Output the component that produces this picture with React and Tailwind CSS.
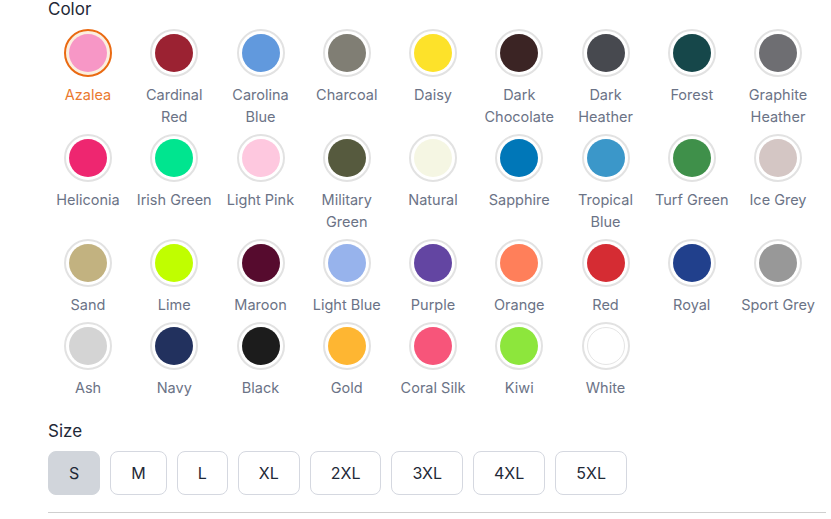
import { useState } from 'react';

const colors = [
  ['Azalea', '#f797c6'],
  ['Cardinal Red', '#9b2232'],
  ['Carolina Blue', '#6199dd'],
  ['Charcoal', '#807e74'],
  ['Daisy', '#fde22a'],
  ['Dark Chocolate', '#3b2424'],
  ['Dark Heather', '#47494f'],
  ['Forest', '#16474a'],
  ['Graphite Heather', '#6e6e72'],
  ['Heliconia', '#ee2670'],
  ['Irish Green', '#00e58f'],
  ['Light Pink', '#fec8df'],
  ['Military Green', '#565a3e'],
  ['Natural', '#f5f6e3'],
  ['Sapphire', '#0077b8'],
  ['Tropical Blue', '#3b97c9'],
  ['Turf Green', '#3f904a'],
  ['Ice Grey', '#d4c6c4'],
  ['Sand', '#c2b280'],
  ['Lime', '#c0fe00'],
  ['Maroon', '#560b2e'],
  ['Light Blue', '#97b3ec'],
  ['Purple', '#6345a2'],
  ['Orange', '#ff7f5a'],
  ['Red', '#d52c33'],
  ['Royal', '#21408c'],
  ['Sport Grey', '#989898'],
  ['Ash', '#d4d4d4'],
  ['Navy', '#22315e'],
  ['Black', '#1c1c1c'],
  ['Gold', '#feb632'],
  ['Coral Silk', '#f7557a'],
  ['Kiwi', '#8de63c'],
  ['White', '#ffffff'],
];

// names that wrap onto two lines in the grid
const twoLine = ['Cardinal Red', 'Carolina Blue', 'Dark Chocolate', 'Dark Heather', 'Graphite Heather', 'Military Green', 'Tropical Blue'];

const sizes = ['S', 'M', 'L', 'XL', '2XL', '3XL', '4XL', '5XL'];

export default function App() {
  const [color, setColor] = useState('Azalea');
  const [size, setSize] = useState('S');

  return (
    <div className="bg-white min-h-[519px] pl-12 pr-[5px]" style={{ fontFamily: 'Inter, sans-serif' }}>
      <div className="text-[17px] leading-[18px] text-[#1f2937]">Color</div>
      <div className="mt-[11px] ml-px grid grid-cols-[repeat(9,78px)] gap-x-[8.25px] gap-y-[6px]">
        {colors.map(([name, hex]) => {
          const active = name === color;
          return (
            <button
              key={name}
              onClick={() => setColor(name)}
              className="flex flex-col items-center"
            >
              <span
                className={
                  'w-12 h-12 rounded-full border-2 p-[3px] ' +
                  (active ? 'border-[#ea6a12] bg-[#fbefe0]' : 'border-[#e2e2e2] bg-white')
                }
              >
                <span
                  className={'block w-full h-full rounded-full ' + (name === 'White' ? 'border border-[#e5e5e5]' : '')}
                  style={{ backgroundColor: hex }}
                />
              </span>
              <span
                className={
                  'mt-[7px] text-[14.5px] leading-[22px] text-center whitespace-nowrap ' +
                  (active ? 'text-[#ea7a2f]' : 'text-[#6b7386]')
                }
              >
                {twoLine.includes(name)
                  ? name.split(' ').map(w => <span key={w} className="block">{w}</span>)
                  : name}
              </span>
            </button>
          );
        })}
      </div>
      <div className="mt-5 text-[17px] leading-6 text-[#1f2937]">Size</div>
      <div className="mt-2 flex gap-[10px]">
        {sizes.map(s => (
          <button
            key={s}
            onClick={() => setSize(s)}
            className={
              'h-11 px-5 rounded-lg text-[16px] text-[#1f2937] border ' +
              (s === size ? 'bg-[#d1d5db] border-[#d1d5db]' : 'bg-white border-[#d5d8e0]')
            }
          >
            {s}
          </button>
        ))}
      </div>
      <div className="mt-[17px] border-t border-[#cfcfcf]" />
    </div>
  );
}
